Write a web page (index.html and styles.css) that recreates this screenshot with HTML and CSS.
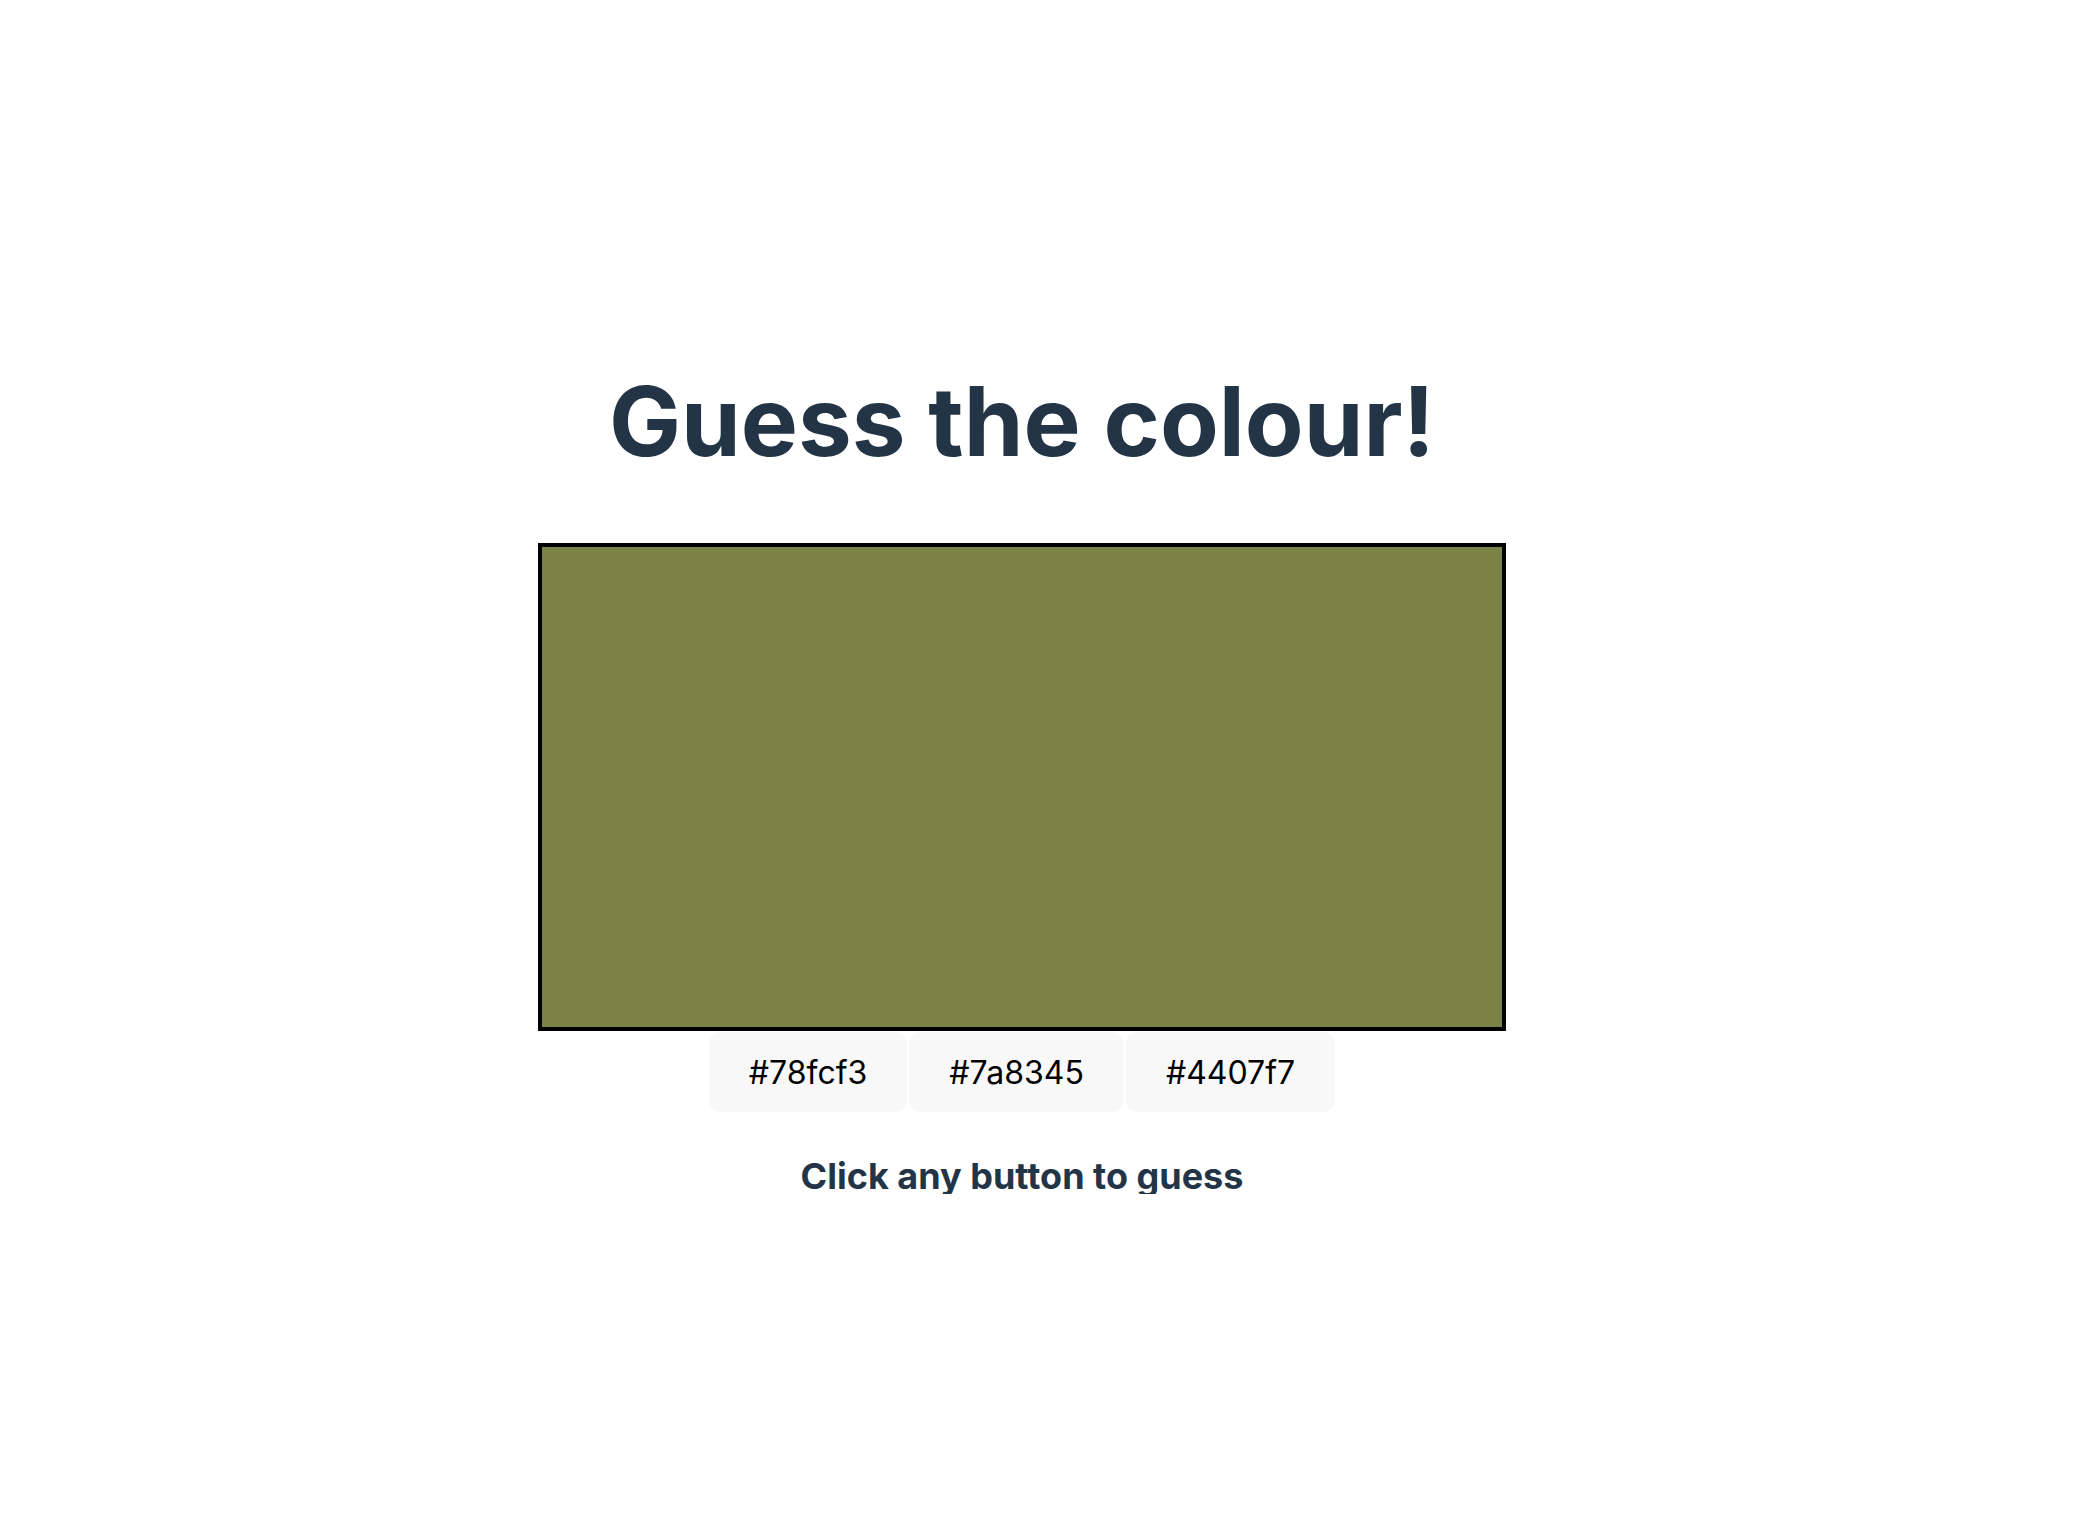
FILE: index.html
```html
<!DOCTYPE html>
<html lang="en">
<head>
<meta charset="utf-8">
<title>Guess the colour!</title>
<link rel="stylesheet" href="styles.css">
</head>
<body>
<main class="game">
  <h1 class="title">Guess the colour!</h1>
  <div class="swatch" style="background-color: #7a8345;"></div>
  <div class="choices">
    <button class="choice">#78fcf3</button>
    <button class="choice">#7a8345</button>
    <button class="choice">#4407f7</button>
  </div>
  <p class="hint">Click any button to guess</p>
</main>
</body>
</html>
```

FILE: styles.css
```css
html, body {
  margin: 0;
  padding: 0;
  background: #ffffff;
}

body {
  font-family: Inter, "Noto Sans", sans-serif;
}

.game {
  display: flex;
  flex-direction: column;
  align-items: center;
  padding: 373px 34px 0 0;
}

.title {
  margin: 0;
  font-size: 96px;
  line-height: 96px;
  font-weight: 700;
  color: #243447;
}

.swatch {
  margin-top: 74px;
  width: 960px;
  height: 480px;
  border: 4px solid #000000;
}

.choices {
  display: flex;
  gap: 2px;
  margin-top: 1px;
}

.choice {
  height: 80px;
  padding: 0 40px;
  border: none;
  border-radius: 12px;
  background: #f8f8f8;
  color: #000000;
  font-family: Inter, "Noto Sans", sans-serif;
  font-size: 32px;
  font-weight: 400;
}

.hint {
  margin: 46px 0 0;
  font-size: 36px;
  line-height: 36px;
  font-weight: 700;
  color: #243447;
}
```
